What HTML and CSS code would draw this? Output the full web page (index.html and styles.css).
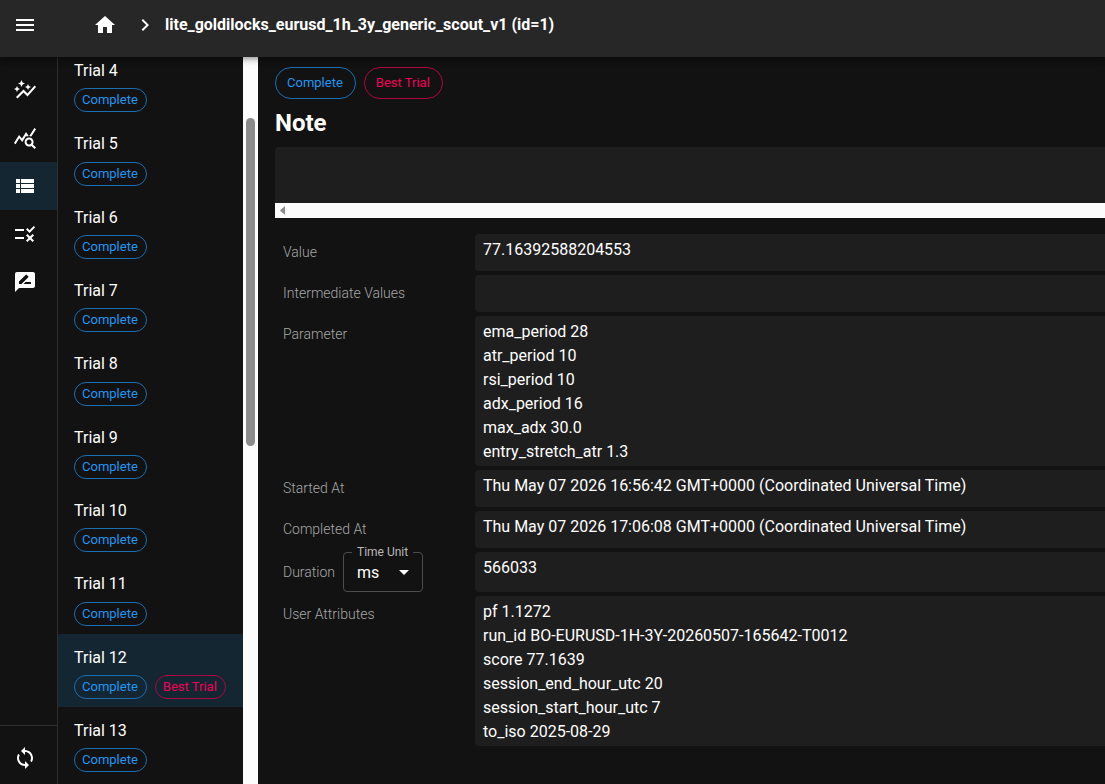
FILE: index.html
```html
<!DOCTYPE html>
<html lang="en">
  <head>
    <meta charset="utf-8">
    <title>lite_goldilocks_eurusd_1h_3y_generic_scout_v1 (id=1)</title>
    <link rel="stylesheet" href="styles.css">
  </head>

  <body>
    <!-- app bar -->
    <header class="appbar">
      <button class="icon-button menu-button" aria-label="Menu">
        <svg class="icon" viewBox="0 0 24 24"><path d="M3 18h18v-2H3v2zm0-5h18v-2H3v2zm0-7v2h18V6H3z"/></svg>
      </button>
      <a class="home" href="#" aria-label="Home">
        <svg class="icon" viewBox="0 0 24 24"><path d="M10 20v-6h4v6h5v-8h3L12 3 2 12h3v8z"/></svg>
      </a>
      <svg class="icon chevron" viewBox="0 0 24 24"><path d="M10 6 8.59 7.41 13.17 12l-4.58 4.59L10 18l6-6z"/></svg>
      <h1 class="study-name">lite_goldilocks_eurusd_1h_3y_generic_scout_v1 (id=1)</h1>
    </header>

    <div class="layout">
      <!-- drawer -->
      <nav class="rail">
        <div class="rail-links">
          <a class="rail-link" href="#" aria-label="History">
            <svg class="icon" viewBox="0 0 24 24"><path d="M14.06 9.94 12 9l2.06-.94L15 6l.94 2.06L18 9l-2.06.94L15 12l-.94-2.06zM4 14l.94-2.06L7 11l-2.06-.94L4 8l-.94 2.06L1 11l2.06.94L4 14zm4.5-5 1.09-2.41L12 5.5 9.59 4.41 8.5 2 7.41 4.41 5 5.5l2.41 1.09L8.5 9zm-4 11.5 6-6.01 4 4L23 8.93l-1.41-1.41-7.09 7.97-4-4L3 19l1.5 1.5z"/></svg>
          </a>
          <a class="rail-link" href="#" aria-label="Analytics">
            <svg class="icon" viewBox="0 0 24 24"><path d="M19.88 18.47c.44-.7.7-1.51.7-2.39 0-2.49-2.01-4.5-4.5-4.5s-4.5 2.01-4.5 4.5 2.01 4.5 4.49 4.5c.88 0 1.7-.26 2.39-.7L21.58 23 23 21.58l-3.12-3.11zm-3.8.11c-1.38 0-2.5-1.12-2.5-2.5s1.12-2.5 2.5-2.5 2.5 1.12 2.5 2.5-1.12 2.5-2.5 2.5zm-.36-8.5c-.74.02-1.45.18-2.1.45l-.55-.83-3.8 6.18-3.01-3.52-3.63 5.81L1 17l5-8 3 3.5L13 6l2.72 4.08zm2.59.5c-.64-.28-1.33-.45-2.05-.49L21.38 2 23 3.18l-4.69 7.4z"/></svg>
          </a>
          <a class="rail-link selected" href="#" aria-label="Trials (List)">
            <svg class="icon" viewBox="0 0 24 24"><path d="M3 14h4v-4H3v4zm0 5h4v-4H3v4zM3 9h4V5H3v4zm5 5h13v-4H8v4zm0 5h13v-4H8v4zM8 5v4h13V5H8z"/></svg>
          </a>
          <a class="rail-link" href="#" aria-label="Trials (Selection)">
            <svg class="icon" viewBox="0 0 24 24"><path d="M16.54 11 13 7.46l1.41-1.41 2.12 2.12 4.24-4.24 1.41 1.41L16.54 11zM11 7H2v2h9V7zm10 6.41L19.59 12 17 14.59 14.41 12 13 13.41 15.59 16 13 18.59 14.41 20 17 17.41 19.59 20 21 18.59 18.41 16 21 13.41zM11 15H2v2h9v-2z"/></svg>
          </a>
          <a class="rail-link" href="#" aria-label="Note">
            <svg class="icon" viewBox="0 0 24 24"><path d="M20 2H4c-1.1 0-1.99.9-1.99 2L2 22l4-4h14c1.1 0 2-.9 2-2V4c0-1.1-.9-2-2-2zM6 14v-2.47l6.88-6.88c.2-.2.51-.2.71 0l1.77 1.77c.2.2.2.51 0 .71L8.47 14H6zm12 0h-7.5l2-2H18v2z"/></svg>
          </a>
        </div>
        <div class="rail-footer">
          <button class="rail-link" aria-label="Live update">
            <svg class="icon" viewBox="0 0 24 24"><path d="M12 4V1L8 5l4 4V6c3.31 0 6 2.69 6 6 0 1.01-.25 1.97-.7 2.8l1.46 1.46C19.54 15.03 20 13.57 20 12c0-4.42-3.58-8-8-8zm0 14c-3.31 0-6-2.69-6-6 0-1.01.25-1.97.7-2.8L5.24 7.74C4.46 8.97 4 10.43 4 12c0 4.42 3.58 8 8 8v3l4-4-4-4v3z"/></svg>
          </button>
        </div>
      </nav>

      <!-- trial list -->
      <div class="trials">
        <ul class="trial-list">
          <li><a class="trial" href="#"><span class="trial-name">Trial 4</span><span class="chips"><span class="chip small">Complete</span></span></a></li>
          <li><a class="trial" href="#"><span class="trial-name">Trial 5</span><span class="chips"><span class="chip small">Complete</span></span></a></li>
          <li><a class="trial" href="#"><span class="trial-name">Trial 6</span><span class="chips"><span class="chip small">Complete</span></span></a></li>
          <li><a class="trial" href="#"><span class="trial-name">Trial 7</span><span class="chips"><span class="chip small">Complete</span></span></a></li>
          <li><a class="trial" href="#"><span class="trial-name">Trial 8</span><span class="chips"><span class="chip small">Complete</span></span></a></li>
          <li><a class="trial" href="#"><span class="trial-name">Trial 9</span><span class="chips"><span class="chip small">Complete</span></span></a></li>
          <li><a class="trial" href="#"><span class="trial-name">Trial 10</span><span class="chips"><span class="chip small">Complete</span></span></a></li>
          <li><a class="trial" href="#"><span class="trial-name">Trial 11</span><span class="chips"><span class="chip small">Complete</span></span></a></li>
          <li><a class="trial selected" href="#"><span class="trial-name">Trial 12</span><span class="chips"><span class="chip small">Complete</span><span class="chip small best">Best Trial</span></span></a></li>
          <li><a class="trial" href="#"><span class="trial-name">Trial 13</span><span class="chips"><span class="chip small">Complete</span></span></a></li>
        </ul>
        <div class="scrollbar"><div class="thumb"></div></div>
      </div>

      <!-- trial detail -->
      <main class="detail">
        <div class="chips">
          <span class="chip">Complete</span>
          <span class="chip best">Best Trial</span>
        </div>

        <h2 class="note-title">Note</h2>
        <div class="note">
          <div class="note-body"></div>
          <div class="note-scroll">
            <svg class="arrow" viewBox="0 0 5 9"><path d="M5 0v9L0 4.500z"/></svg>
          </div>
        </div>

        <dl class="fields">
          <dt>Value</dt>
          <dd>77.16392588204553</dd>
          <dt>Intermediate Values</dt>
          <dd></dd>
          <dt>Parameter</dt>
          <dd>ema_period 28<br>atr_period 10<br>rsi_period 10<br>adx_period 16<br>max_adx 30.0<br>entry_stretch_atr 1.3</dd>
          <dt>Started At</dt>
          <dd>Thu May 07 2026 16:56:42 GMT+0000 (Coordinated Universal Time)</dd>
          <dt>Completed At</dt>
          <dd>Thu May 07 2026 17:06:08 GMT+0000 (Coordinated Universal Time)</dd>
          <dt class="duration">
            Duration
            <span class="select">
              <label for="unit">Time Unit</label>
              <select id="unit">
                <option>ms</option>
                <option>s</option>
                <option>min</option>
                <option>h</option>
              </select>
              <svg class="icon caret" viewBox="0 0 24 24"><path d="m7 10 5 5 5-5z"/></svg>
            </span>
          </dt>
          <dd>566033</dd>
          <dt>User Attributes</dt>
          <dd>pf 1.1272<br>run_id BO-EURUSD-1H-3Y-20260507-165642-T0012<br>score 77.1639<br>session_end_hour_utc 20<br>session_start_hour_utc 7<br>to_iso 2025-08-29</dd>
        </dl>
      </main>
    </div>
  </body>
</html>
```
FILE: styles.css
```css
* {
  box-sizing: border-box;
}

body {
  display: flex;
  flex-direction: column;
  height: 100vh;
  margin: 0;
  overflow: hidden;
  background: #121212;
  color: #fff;
  font-family: Roboto, sans-serif;
  font-size: 16px;
  line-height: 24px;
}

a {
  color: inherit;
  text-decoration: none;
}

button {
  padding: 0;
  border: none;
  background: none;
  color: inherit;
}

.icon {
  display: block;
  width: 24px;
  height: 24px;
  fill: currentColor;
}

/* app bar */
.appbar {
  position: relative;
  z-index: 1;
  display: flex;
  flex: none;
  align-items: center;
  height: 57px;
  padding: 0 13px 7px;
  background: #272727;
  box-shadow: 0 2px 4px -1px rgba(0, 0, 0, 0.2), 0 4px 5px rgba(0, 0, 0, 0.14), 0 1px 10px rgba(0, 0, 0, 0.12);
}

.menu-button {
  margin-right: 56px;
}

.chevron {
  margin: 0 8px 0 16px;
}

.study-name {
  margin: 0;
  font-size: 16px;
  font-weight: 700;
}

.layout {
  display: flex;
  flex: 1;
  min-height: 0;
}

/* drawer */
.rail {
  display: flex;
  flex: none;
  flex-direction: column;
  justify-content: space-between;
  width: 58px;
  border-right: 1px solid #2e2e2e;
}

.rail-links {
  padding-top: 9px;
}

.rail-link {
  display: flex;
  align-items: center;
  width: 100%;
  height: 48px;
  padding: 0 13px;
}

.rail-footer {
  padding: 8px 0 2px;
  border-top: 1px solid #2e2e2e;
}

.selected {
  background: #142632;
}

/* trial list */
.trials {
  display: flex;
  flex: none;
  width: 200px;
  overflow: hidden;
}

.trial-list {
  flex: 1;
  margin: -10px 0 0;
  padding: 0;
  list-style: none;
}

.trial {
  display: block;
  padding: 13px 16px 8px;
}

.trial-name {
  display: block;
  margin-bottom: 7px;
  line-height: 1.334;
}

.scrollbar {
  width: 15px;
  padding: 61px 3px 0;
  background: #fcfcfc;
}

.thumb {
  height: 328px;
  border-radius: 5px;
  background: #8b8b8b;
}

.chips {
  display: flex;
  gap: 8px;
}

.chip {
  height: 32px;
  padding: 0 12px 0 11px;
  border: 1px solid #1a6fb3;
  border-radius: 16px;
  color: #2196f3;
  font-size: 13px;
  line-height: 30px;
  white-space: nowrap;
}

.chip.small {
  height: 24px;
  padding: 0 8px 0 7px;
  line-height: 22px;
}

.chip.best {
  border-color: #b00542;
  color: #f50057;
}

/* trial detail */
.detail {
  flex: 1;
  min-width: 0;
  padding: 10px 0 0 17px;
}

.note-title {
  margin: 8px 0;
  font-size: 24px;
  font-weight: 700;
  line-height: 32px;
}

.note-body {
  height: 56px;
  border-radius: 4px 0 0 0;
  background: #1e1e1e;
}

.note-scroll {
  height: 15px;
  padding: 3px 5px;
  background: #fcfcfc;
}

.arrow {
  display: block;
  width: 5px;
  height: 9px;
  fill: #8b8b8b;
}

.fields {
  display: grid;
  grid-template-columns: 192px 1fr;
  row-gap: 4px;
  margin: 16px 0 0;
  padding-left: 8px;
}

.fields dt {
  color: #a8a8a8;
  font-size: 14px;
  font-weight: 300;
  line-height: 37px;
}

.fields dd {
  min-height: 37px;
  margin: 0;
  padding: 4px 8px 2px;
  border-radius: 4px 0 0 4px;
  background: #1e1e1e;
}

.fields .duration {
  display: flex;
  align-items: center;
  gap: 8px;
  line-height: 40px;
}

.select {
  position: relative;
  width: 80px;
  font-weight: 400;
}

.select label {
  position: absolute;
  top: -8px;
  left: 9px;
  padding: 0 5px;
  background: #121212;
  color: #b8b8b8;
  font-size: 12px;
  line-height: 16px;
}

.select select {
  display: block;
  width: 100%;
  height: 40px;
  padding: 0 13px;
  border: 1px solid #4c4c4c;
  border-radius: 4px;
  appearance: none;
  background: none;
  color: #fff;
  font: inherit;
  font-size: 16px;
}

.caret {
  position: absolute;
  top: 8px;
  right: 7px;
  color: #fff;
  pointer-events: none;
}
```
